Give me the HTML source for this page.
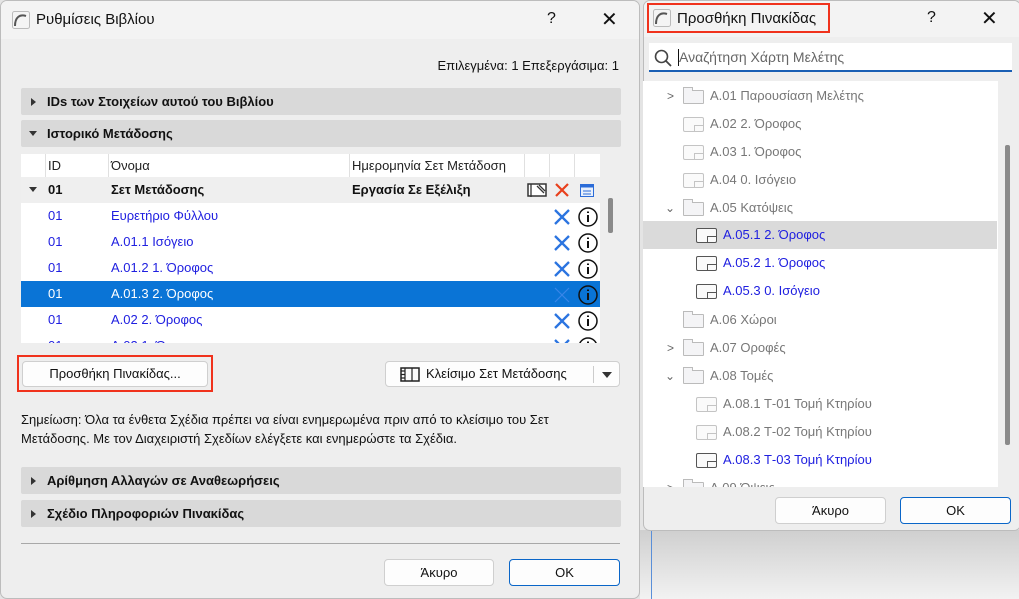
<!DOCTYPE html>
<html><head><meta charset="utf-8"><style>
*{box-sizing:border-box;margin:0;padding:0}
body{width:1019px;height:599px;overflow:hidden;background:#e4e4e4;font-family:"Liberation Sans","DejaVu Sans",sans-serif;font-size:13px;color:#111;position:relative}
.abs{position:absolute}
.dlg{position:absolute;background:#eeeeee;border:1px solid #bcbcbc;border-radius:7px;overflow:hidden}
.tb{position:absolute;left:0;top:0;right:0;height:38px;background:#f3f3f3}
.sec{position:absolute;left:20px;width:600px;height:27px;background:#d9d9d9;border-radius:2px;font-weight:bold;font-size:13px;line-height:27px;padding-left:26px}
.tri{position:absolute;left:10px;top:10px;width:0;height:0;border-top:4px solid transparent;border-bottom:4px solid transparent;border-left:5px solid #333}
.trid{position:absolute;left:8px;top:11px;width:0;height:0;border-left:4px solid transparent;border-right:4px solid transparent;border-top:5px solid #333}
.btn{position:absolute;background:#fdfdfd;border:1px solid #cfcfcf;border-radius:4px;text-align:center;font-size:13px}
.row{position:absolute;left:20px;width:579px;height:26px;line-height:26px;color:#2020e0}
.row span{position:absolute}
.rr{position:absolute;left:643px;width:354px;height:28px;line-height:28px;color:#777;font-size:13px}
.chev{position:absolute;left:24px;top:0;color:#666;font-size:12px}
.fold{position:absolute;left:40px;top:8px;width:21px;height:14px;border:1px solid #bbb;background:#f4f4f6;border-radius:1px}
.fold:before{content:"";position:absolute;left:-1px;top:-4px;width:8px;height:3px;border:1px solid #bbb;border-bottom:none;background:#f4f4f6}
.sh{position:absolute;top:7px;width:21px;height:15px;border:1px solid #c4c4c4;border-radius:2px;background:#fafafa}
.sh:after{content:"";position:absolute;right:0;bottom:0;width:8px;height:5px;border-top:1px solid #c4c4c4;border-left:1px solid #c4c4c4}
.sh.d{border-color:#555}.sh.d:after{border-color:#555}
</style></head><body>

<div class="abs" style="left:640px;top:530px;width:379px;height:69px;background:linear-gradient(#cfcfcf,#f2f2f2)"></div>
<div class="abs" style="left:651px;top:530px;width:1px;height:69px;background:#5a8fd8"></div>

<div class="dlg" style="left:0;top:0;width:640px;height:599px">
 <div class="tb"></div>
 <svg class="abs" style="left:11px;top:10px" width="18" height="18" viewBox="0 0 18 18"><rect x="0.5" y="0.5" width="17" height="17" rx="2" fill="#f4f4f4" stroke="#bbb"/><path d="M3 15 C3 6 8 3 14 5" fill="none" stroke="#555" stroke-width="2"/></svg>
 <div class="abs" style="left:35px;top:10px;font-size:15px">Ρυθμίσεις Βιβλίου</div>
 <div class="abs" style="left:546px;top:9px;font-size:16px">?</div>
 <div class="abs" style="left:600px;top:6px;font-size:20px;font-weight:lighter">✕</div>
 <div class="abs" style="right:20px;top:57px">Επιλεγμένα: 1 Επεξεργάσιμα: 1</div>
 <div class="sec" style="top:87px"><i class="tri"></i>IDs των Στοιχείων αυτού του Βιβλίου</div>
 <div class="sec" style="top:119px"><i class="trid"></i>Ιστορικό Μετάδοσης</div>

 <div class="abs" style="left:20px;top:153px;width:579px;height:189px;background:#fff;overflow:hidden">
  <div class="abs" style="left:0;top:0;width:579px;height:23px;background:#fff;line-height:23px;color:#222">
   <span class="abs" style="left:24px;top:0;width:1px;height:23px;background:#e0e0e0"></span>
   <span class="abs" style="left:27px">ID</span>
   <span class="abs" style="left:87px;top:0;width:1px;height:23px;background:#e0e0e0"></span>
   <span class="abs" style="left:90px">Όνομα</span>
   <span class="abs" style="left:328px;top:0;width:1px;height:23px;background:#e0e0e0"></span>
   <span class="abs" style="left:331px">Ημερομηνία Σετ Μετάδοση</span>
   <span class="abs" style="left:503px;top:0;width:1px;height:23px;background:#e0e0e0"></span>
   <span class="abs" style="left:528px;top:0;width:1px;height:23px;background:#e0e0e0"></span>
   <span class="abs" style="left:553px;top:0;width:1px;height:23px;background:#e0e0e0"></span>
  </div>
  <div class="abs" style="left:0;top:23px;width:579px;height:26px;background:#efefef;line-height:26px;font-weight:bold">
   <i class="trid" style="left:8px;top:10px"></i>
   <span class="abs" style="left:27px">01</span>
   <span class="abs" style="left:90px">Σετ Μετάδοσης</span>
   <span class="abs" style="left:331px">Εργασία Σε Εξέλιξη</span>
   <svg class="abs" style="left:506px;top:6px" width="20" height="14"><rect x="1" y="1" width="18" height="12" fill="#fff" stroke="#333" stroke-width="1.5"/><path d="M4 1v13M10 3l7 7M12 2l6 6" stroke="#333" stroke-width="1.3"/></svg>
   <svg class="abs" style="left:533px;top:5px" width="16" height="16"><path d="M2 2L14 14M14 2L2 14" stroke="#e8401c" stroke-width="2.2"/></svg>
   <svg class="abs" style="left:559px;top:7px" width="14" height="13"><rect x="0.5" y="0.5" width="13" height="12" fill="#e8f0fc" stroke="#2b6cd8"/><rect x="0.5" y="0.5" width="13" height="3" fill="#2b6cd8"/><path d="M3 7h8M3 10h8" stroke="#2b6cd8"/></svg>
  </div>
 </div>
 <div class="row" style="top:202px"><span style="left:27px">01</span><span style="left:90px">Ευρετήριο Φύλλου</span></div>
 <div class="row" style="top:228px"><span style="left:27px">01</span><span style="left:90px">Α.01.1 Ισόγειο</span></div>
 <div class="row" style="top:254px"><span style="left:27px">01</span><span style="left:90px">Α.01.2 1. Όροφος</span></div>
 <div class="row" style="top:280px;background:#0a74d6;color:#fff"><span style="left:27px">01</span><span style="left:90px">Α.01.3 2. Όροφος</span></div>
 <div class="row" style="top:306px"><span style="left:27px">01</span><span style="left:90px">Α.02 2. Όροφος</span></div>
 <div class="row" style="top:332px;height:10px;overflow:hidden"><span style="left:27px">01</span><span style="left:90px">Α.02 1. Όρ</span></div>
 <svg class="abs" style="left:552px;top:204px" width="48" height="138">
  <g id="ri"><path d="M2 5L16 19M16 5L2 19" stroke="#2b74e0" stroke-width="2.3"/><circle cx="35" cy="12" r="9" fill="none" stroke="#111" stroke-width="1.5"/><path d="M35 10v7M35 6.5v1.5" stroke="#111" stroke-width="2"/></g>
  <use href="#ri" y="26"/><use href="#ri" y="52"/>
  <g transform="translate(0,78)"><path d="M2 5L16 19M16 5L2 19" stroke="#3a86e8" stroke-width="1.2"/><circle cx="35" cy="12" r="9" fill="none" stroke="#111" stroke-width="1.5"/><path d="M35 10v7M35 6.5v1.5" stroke="#111" stroke-width="2"/></g>
  <use href="#ri" y="104"/><use href="#ri" y="130"/>
 </svg>
 <div class="abs" style="left:607px;top:197px;width:5px;height:35px;background:#8a8a8a;border-radius:2px"></div>

 <div class="abs" style="left:16px;top:354px;width:196px;height:37px;border:2px solid #f0321c"></div>
 <div class="btn" style="left:21px;top:360px;width:186px;height:26px;line-height:24px">Προσθήκη Πινακίδας...</div>
 <div class="btn" style="left:384px;top:360px;width:235px;height:26px;line-height:24px;text-align:left;padding-left:40px">Κλείσιμο Σετ Μετάδοσης
  <svg class="abs" style="left:14px;top:5px" width="20" height="15"><rect x="1" y="1" width="18" height="13" fill="none" stroke="#222" stroke-width="1.5"/><path d="M5 1v13M1 4h4M1 7.5h4M1 11h4M12 1v13" stroke="#222" stroke-width="1.2"/></svg>
  <span class="abs" style="left:207px;top:4px;width:1px;height:17px;background:#ccc"></span>
  <span class="abs" style="left:216px;top:10px;border-left:5px solid transparent;border-right:5px solid transparent;border-top:6px solid #333"></span>
 </div>
 <div class="abs" style="left:20px;top:409px;line-height:19px;width:610px">Σημείωση: Όλα τα ένθετα Σχέδια πρέπει να είναι ενημερωμένα πριν από το κλείσιμο του Σετ<br>Μετάδοσης. Με τον Διαχειριστή Σχεδίων ελέγξετε και ενημερώστε τα Σχέδια.</div>
 <div class="sec" style="top:466px"><i class="tri"></i>Αρίθμηση Αλλαγών σε Αναθεωρήσεις</div>
 <div class="sec" style="top:499px"><i class="tri"></i>Σχέδιο Πληροφοριών Πινακίδας</div>
 <div class="abs" style="left:20px;top:542px;width:599px;height:1px;background:#a8a8a8"></div>
 <div class="btn" style="left:383px;top:558px;width:110px;height:27px;line-height:25px">Άκυρο</div>
 <div class="btn" style="left:508px;top:558px;width:111px;height:27px;line-height:25px;border-color:#0a66c8">OK</div>
</div>

<div class="dlg" style="left:643px;top:0;width:378px;height:531px">
 <div class="tb" style="height:36px"></div>
</div>
<div class="abs" style="left:647px;top:3px;width:183px;height:30px;border:2px solid #f0321c"></div>
<svg class="abs" style="left:653px;top:9px" width="18" height="18" viewBox="0 0 18 18"><rect x="0.5" y="0.5" width="17" height="17" rx="2" fill="#f4f4f4" stroke="#bbb"/><path d="M3 15 C3 6 8 3 14 5" fill="none" stroke="#555" stroke-width="2"/></svg>
<div class="abs" style="left:677px;top:10px;font-size:15px">Προσθήκη Πινακίδας</div>
<div class="abs" style="left:927px;top:9px;font-size:16px">?</div>
<div class="abs" style="left:981px;top:6px;font-size:20px">✕</div>
<div class="abs" style="left:649px;top:43px;width:363px;height:29px;background:#fff;border-bottom:2px solid #1a5fb4"></div>
<svg class="abs" style="left:654px;top:49px" width="18" height="18"><circle cx="7.5" cy="7.5" r="6" fill="none" stroke="#444" stroke-width="1.6"/><path d="M12 12l5 5" stroke="#444" stroke-width="1.8"/></svg>
<div class="abs" style="left:678px;top:49px;width:1px;height:17px;background:#111"></div>
<div class="abs" style="left:679px;top:49px;color:#666;font-size:14px">Αναζήτηση Χάρτη Μελέτης</div>

<div class="abs" style="left:643px;top:81px;width:355px;height:406px;background:#fff;overflow:hidden">
 <div class="rr" style="left:0;top:1px"><span class="chev">&gt;</span><i class="fold"></i><span class="abs" style="left:67px">Α.01 Παρουσίαση Μελέτης</span></div>
 <div class="rr" style="left:0;top:29px"><i class="sh" style="left:40px"></i><span class="abs" style="left:67px">Α.02 2. Όροφος</span></div>
 <div class="rr" style="left:0;top:57px"><i class="sh" style="left:40px"></i><span class="abs" style="left:67px">Α.03 1. Όροφος</span></div>
 <div class="rr" style="left:0;top:85px"><i class="sh" style="left:40px"></i><span class="abs" style="left:67px">Α.04 0. Ισόγειο</span></div>
 <div class="rr" style="left:0;top:113px"><span class="chev" style="left:22px">⌄</span><i class="fold"></i><span class="abs" style="left:67px">Α.05 Κατόψεις</span></div>
 <div class="rr" style="left:0;top:140px;background:#dadada;color:#2020e0"><i class="sh d" style="left:53px"></i><span class="abs" style="left:80px">Α.05.1 2. Όροφος</span></div>
 <div class="rr" style="left:0;top:168px;color:#2020e0"><i class="sh d" style="left:53px"></i><span class="abs" style="left:80px">Α.05.2 1. Όροφος</span></div>
 <div class="rr" style="left:0;top:196px;color:#2020e0"><i class="sh d" style="left:53px"></i><span class="abs" style="left:80px">Α.05.3 0. Ισόγειο</span></div>
 <div class="rr" style="left:0;top:225px"><i class="fold"></i><span class="abs" style="left:67px">Α.06 Χώροι</span></div>
 <div class="rr" style="left:0;top:253px"><span class="chev">&gt;</span><i class="fold"></i><span class="abs" style="left:67px">Α.07 Οροφές</span></div>
 <div class="rr" style="left:0;top:281px"><span class="chev" style="left:22px">⌄</span><i class="fold"></i><span class="abs" style="left:67px">Α.08 Τομές</span></div>
 <div class="rr" style="left:0;top:309px"><i class="sh" style="left:53px"></i><span class="abs" style="left:80px">Α.08.1 Τ-01 Τομή Κτηρίου</span></div>
 <div class="rr" style="left:0;top:337px"><i class="sh" style="left:53px"></i><span class="abs" style="left:80px">Α.08.2 Τ-02 Τομή Κτηρίου</span></div>
 <div class="rr" style="left:0;top:365px;color:#2020e0"><i class="sh d" style="left:53px"></i><span class="abs" style="left:80px">Α.08.3 Τ-03 Τομή Κτηρίου</span></div>
 <div class="rr" style="left:0;top:393px"><span class="chev">&gt;</span><i class="fold"></i><span class="abs" style="left:67px">Α.09 Όψεις</span></div>
</div>
<div class="abs" style="left:1005px;top:145px;width:5px;height:300px;background:#8a8a8a;border-radius:2px"></div>
<div class="btn" style="left:775px;top:497px;width:111px;height:27px;line-height:25px">Άκυρο</div>
<div class="btn" style="left:900px;top:497px;width:111px;height:27px;line-height:25px;border-color:#0a66c8">OK</div>
</body></html>
